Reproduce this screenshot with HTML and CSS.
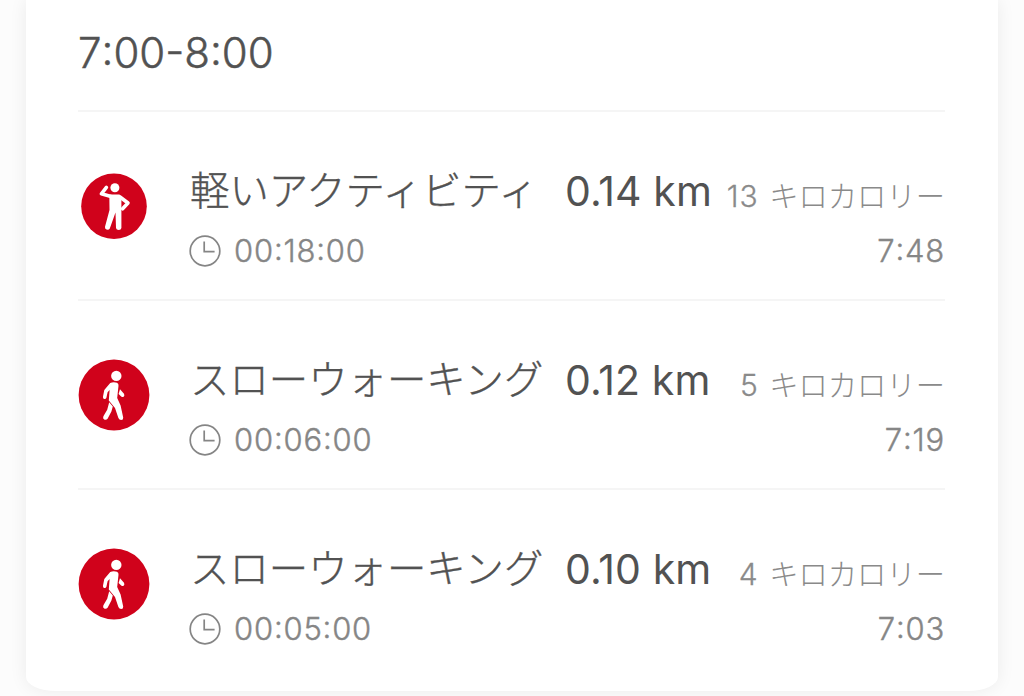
FILE: index.html
```html
<!DOCTYPE html>
<html lang="ja">
<head>
<meta charset="utf-8">
<title>7:00-8:00</title>
<link rel="stylesheet" href="styles.css">
</head>
<body>
<svg class="defs" width="0" height="0" aria-hidden="true">
  <symbol id="clock" viewBox="0 0 32 32">
    <circle cx="16" cy="16" r="14.8"/>
    <path d="M15.2 6.5V16.7H25.6"/>
  </symbol>
  <symbol id="walk" viewBox="0 0 72 72">
    <circle cx="36" cy="36" r="35.4" fill="#d0021b"/>
    <circle cx="38.3" cy="16.9" r="5.2" fill="#fff"/>
    <path fill="#fff" d="M32.2 24Q35.5 22.6 39 23.8Q40.8 24.6 40.5 26.7L39.2 39L42.6 46.5L45.2 58.5Q45.4 61 43.2 61Q41.2 61 40.4 59L37 49L30.8 41.5L31.6 31L29.6 33.2L28.4 38.7Q27.8 40.4 26.2 40Q24.6 39.4 25 37.4L26.3 31Z"/>
    <path fill="#fff" d="M31.2 43.2L34.8 47.4L33.4 52.4L29.6 59.8Q28.2 61.4 26.2 60.6Q24.4 59.4 25.4 57.2L29.2 50.8Z"/>
    <path fill="#fff" d="M42 30.2L46 34.8Q47 36.8 45.6 37.8Q44.6 38.4 43.2 37.4L40.6 35Z"/>
  </symbol>
  <symbol id="stand" viewBox="0 0 72 72">
    <circle cx="36" cy="36.3" r="32.8" fill="#d0021b"/>
    <circle cx="36.9" cy="17.8" r="4.5" fill="#fff"/>
    <path fill="none" stroke="#fff" stroke-width="3.6" stroke-linecap="round" stroke-linejoin="round" d="M33 26.4L23.4 23.8L28.4 17.4M42 27L50 33L44.6 38.8"/>
    <path fill="#fff" d="M31.3 24.6H41.5L43.4 27V58Q43 60 40.8 60Q38.3 60 38 58L37.5 42.5L31.8 58.5Q30.8 60.2 28.5 59.6Q26.6 58.8 27 56.8L31.5 40Z"/>
  </symbol>
</svg>
<main class="card">
  <h1 class="hours">7<span class="colon">:</span>00-8<span class="colon">:</span>00</h1>
  <ul class="list">
    <li class="row">
      <svg class="badge"><use href="#stand"/></svg>
      <div class="body">
        <div class="line">
          <span class="name">軽いアクティビティ</span>
          <span class="distance">0.14 km</span>
          <span class="energy"><span class="count">13</span><span class="unit">キロカロリー</span></span>
        </div>
        <div class="meta">
          <svg class="clock"><use href="#clock"/></svg>
          <span class="duration">00<span class="colon">:</span>18<span class="colon">:</span>00</span>
          <span class="time">7<span class="colon">:</span>48</span>
        </div>
      </div>
    </li>
    <li class="row">
      <svg class="badge"><use href="#walk"/></svg>
      <div class="body">
        <div class="line">
          <span class="name">スローウォーキング</span>
          <span class="distance">0.12 km</span>
          <span class="energy"><span class="count">5</span><span class="unit">キロカロリー</span></span>
        </div>
        <div class="meta">
          <svg class="clock"><use href="#clock"/></svg>
          <span class="duration">00<span class="colon">:</span>06<span class="colon">:</span>00</span>
          <span class="time">7<span class="colon">:</span>19</span>
        </div>
      </div>
    </li>
    <li class="row">
      <svg class="badge"><use href="#walk"/></svg>
      <div class="body">
        <div class="line">
          <span class="name">スローウォーキング</span>
          <span class="distance">0.10 km</span>
          <span class="energy"><span class="count">4</span><span class="unit">キロカロリー</span></span>
        </div>
        <div class="meta">
          <svg class="clock"><use href="#clock"/></svg>
          <span class="duration">00<span class="colon">:</span>05<span class="colon">:</span>00</span>
          <span class="time">7<span class="colon">:</span>03</span>
        </div>
      </div>
    </li>
  </ul>
</main>
</body>
</html>
```
FILE: styles.css
```css
* { box-sizing: border-box; }
body {
  margin: 0;
  height: 696px;
  overflow: hidden;
  background: #fcfcfc;
  color: #525252;
  font-family: Inter, "Noto Sans CJK JP", sans-serif;
}
.defs { display: block; }
.card {
  height: 691px;
  margin: 0 26px;
  padding: 0 53px 0 52px;
  background: #fff;
  border-radius: 0 0 30px 30px / 0 0 14px 14px;
  box-shadow: 0 0 18px rgba(0, 0, 0, 0.07);
}
.hours {
  margin: 0;
  height: 110px;
  padding-top: 23px;
  font-size: 42px;
  font-weight: 300;
  line-height: 60px;
  -webkit-text-stroke: 0.5px currentColor;
}
.colon {
  line-height: 1;
  vertical-align: 0.08em;
}
.list { margin: 0; padding: 0; list-style: none; }
.row {
  display: flex;
  height: 189px;
  border-top: 2px solid #f5f5f5;
}
.badge {
  flex: none;
  width: 72px;
  height: 72px;
  margin: 58px 40px 0 0;
}
.body { flex: 1; padding-top: 48px; }
.line { display: flex; height: 61px; white-space: nowrap; }
.name {
  width: 376px;
  font-family: "Noto Sans CJK JP", sans-serif;
  font-size: 39.4px;
  font-weight: 300;
  line-height: 55px;
  -webkit-text-stroke: 0.4px currentColor;
}
.distance {
  margin-left: -1px;
  font-size: 41px;
  font-weight: 400;
  line-height: 62px;
  letter-spacing: 0.1px;
}
.energy {
  display: flex;
  gap: 10.5px;
  margin-left: auto;
  color: #8a8a8a;
}
.count {
  font-size: 30px;
  font-weight: 300;
  line-height: 73px;
  letter-spacing: 1px;
  -webkit-text-stroke: 0.3px currentColor;
}
.unit {
  font-family: "Noto Sans CJK JP", sans-serif;
  font-size: 29.3px;
  font-weight: 300;
  line-height: 68px;
}
.meta {
  display: flex;
  align-items: center;
  height: 59px;
  color: #868686;
  font-size: 31px;
  font-weight: 300;
  -webkit-text-stroke: 0.4px currentColor;
}
.clock {
  width: 32px;
  height: 32px;
  margin-left: -1px;
  margin-right: 13px;
  fill: none;
  stroke: #858585;
  stroke-width: 1.7;
}
.duration { letter-spacing: 0.8px; }
.time { margin-left: auto; letter-spacing: 0.8px; }
```
